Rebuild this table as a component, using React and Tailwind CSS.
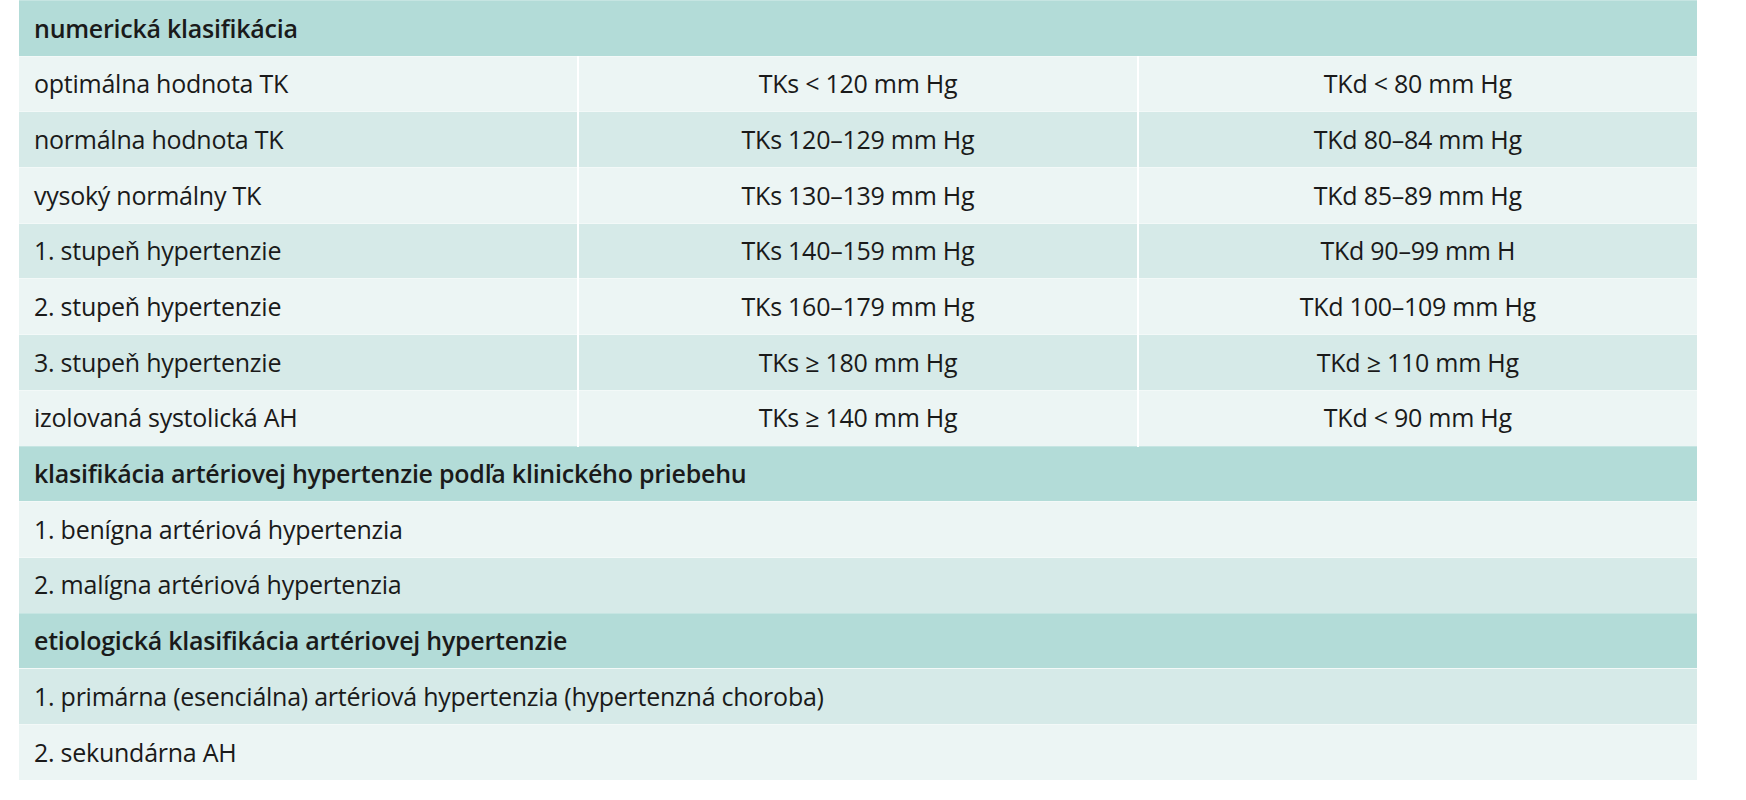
const numeric = [
  ['optimálna hodnota TK', 'TKs < 120 mm Hg', 'TKd < 80 mm Hg'],
  ['normálna hodnota TK', 'TKs 120–129 mm Hg', 'TKd 80–84 mm Hg'],
  ['vysoký normálny TK', 'TKs 130–139 mm Hg', 'TKd 85–89 mm Hg'],
  ['1. stupeň hypertenzie', 'TKs 140–159 mm Hg', 'TKd 90–99 mm H'],
  ['2. stupeň hypertenzie', 'TKs 160–179 mm Hg', 'TKd 100–109 mm Hg'],
  ['3. stupeň hypertenzie', 'TKs ≥ 180 mm Hg', 'TKd ≥ 110 mm Hg'],
  ['izolovaná systolická AH', 'TKs ≥ 140 mm Hg', 'TKd < 90 mm Hg'],
];

function Header({ children }) {
  return (
    <tr className="h-[55.7px] bg-[#b3dcd8] border-t border-[#c6e5e2]">
      <td colSpan={3} className="pl-[15px] font-semibold">
        {children}
      </td>
    </tr>
  );
}

function Wide({ children, dark }) {
  return (
    <tr className={`h-[55.7px] border-t border-[#f3f9f8] ${dark ? 'bg-[#d6eae8]' : 'bg-[#ecf5f4]'}`}>
      <td colSpan={3} className="pl-[15px]">
        {children}
      </td>
    </tr>
  );
}

export default function App() {
  return (
    <div className="min-h-screen bg-white pl-[19px] font-['Open_Sans',sans-serif] text-[25px] tracking-[-0.25px] text-[#1a1a1a]">
      <table className="w-[1678px] table-fixed border-collapse">
        <tbody>
          <Header>numerická klasifikácia</Header>
          {numeric.map(([label, sys, dia], i) => (
            <tr
              key={label}
              className={`h-[55.7px] border-t border-[#f3f9f8] ${i % 2 ? 'bg-[#d6eae8]' : 'bg-[#ecf5f4]'}`}
            >
              <td className="pl-[15px] border-r-2 border-white">{label}</td>
              <td className="text-center border-r-2 border-white">{sys}</td>
              <td className="text-center">{dia}</td>
            </tr>
          ))}
          <Header>klasifikácia artériovej hypertenzie podľa klinického priebehu</Header>
          <Wide>1. benígna artériová hypertenzia</Wide>
          <Wide dark>2. malígna artériová hypertenzia</Wide>
          <Header>etiologická klasifikácia artériovej hypertenzie</Header>
          <Wide dark>1. primárna (esenciálna) artériová hypertenzia (hypertenzná choroba)</Wide>
          <Wide>2. sekundárna AH</Wide>
        </tbody>
      </table>
    </div>
  );
}
